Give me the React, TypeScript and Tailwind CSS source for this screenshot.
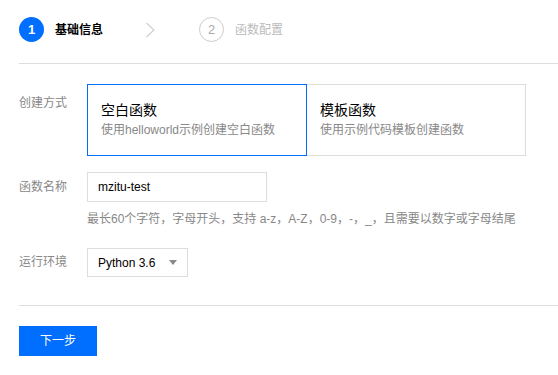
import { useState } from "react";

const font = { fontFamily: '"Liberation Sans", Arial, "Noto Sans CJK SC", sans-serif' };

export default function App() {
  const [mode, setMode] = useState<'blank' | 'template'>('blank')
  const [name, setName] = useState('mzitu-test')

  const cards = [
    { id: 'blank' as const, title: '空白函数', desc: '使用helloworld示例创建空白函数' },
    { id: 'template' as const, title: '模板函数', desc: '使用示例代码模板创建函数' },
  ]

  return (
    <div className="w-[558px] h-[375px] bg-white text-[12px] text-black overflow-hidden" style={font}>
      {/* 步骤条 */}
      <div className="ml-[19px] h-[64px] flex items-center border-b border-[#dddddd] pb-[4px]">
        <div className="flex items-center">
          <span className="w-[25px] h-[25px] rounded-full bg-[#006eff] text-white font-bold flex items-center justify-center text-[13px]">1</span>
          <span className="ml-[11px] font-bold text-black">基础信息</span>
        </div>
        <svg className="ml-[42px]" width="11" height="16" viewBox="0 0 11 16">
          <path d="M1.5 1 L9 8 L1.5 15" fill="none" stroke="#cfcfcf" strokeWidth="1.2" />
        </svg>
        <div className="ml-[43px] flex items-center">
          <span className="w-[25px] h-[25px] rounded-full border border-[#cccccc] text-[#aaaaaa] flex items-center justify-center text-[13px]">2</span>
          <span className="ml-[11px] text-[#bbbbbb]">函数配置</span>
        </div>
      </div>

      <div className="px-[19px] pt-[20px]">
        {/* 创建方式 */}
        <div className="flex">
          <label className="w-[68px] pt-[10px] text-[#888888]">创建方式</label>
          <div className="flex">
            {cards.map((card) => (
              <button
                key={card.id}
                onClick={() => setMode(card.id)}
                className={`w-[220px] h-[72px] flex flex-col justify-start items-start text-left pl-[13px] pt-[16px] border ${mode === card.id ? 'border-[#006eff] relative z-10' : 'border-[#dddddd] -ml-[1px]'}`}
              >
                <div className="text-[14px] leading-[18px] text-black">{card.title}</div>
                <div className="mt-[3px] text-[#888888] leading-[16px]">{card.desc}</div>
              </button>
            ))}
          </div>
        </div>

        {/* 函数名称 */}
        <div className="flex mt-[16px]">
          <label className="w-[68px] leading-[30px] text-[#888888]">函数名称</label>
          <div>
            <input
              value={name}
              onChange={(e) => setName(e.target.value)}
              className="w-[180px] h-[30px] border border-[#dddddd] px-[10px] outline-none text-black"
            />
            <p className="mt-[9px] text-[#888888] leading-[16px]">
              最长60个字符，字母开头，支持 a-z，A-Z，0-9，-，_，且需要以数字或字母结尾
            </p>
          </div>
        </div>

        {/* 运行环境 */}
        <div className="flex mt-[21px]">
          <label className="w-[68px] leading-[29px] text-[#888888]">运行环境</label>
          <div className="w-[101px] h-[29px] border border-[#dddddd] pl-[10px] pr-[10px] flex items-center justify-between">
            <span>Python 3.6</span>
            <svg width="8" height="5" viewBox="0 0 8 5">
              <path d="M0 0 H8 L4 5 Z" fill="#888888" />
            </svg>
          </div>
        </div>

        <div className="mt-[28px] border-t border-[#dddddd] -mr-[19px]" />

        <button className="mt-[20px] w-[78px] h-[30px] bg-[#006eff] text-white">下一步</button>
      </div>
    </div>
  )
}
